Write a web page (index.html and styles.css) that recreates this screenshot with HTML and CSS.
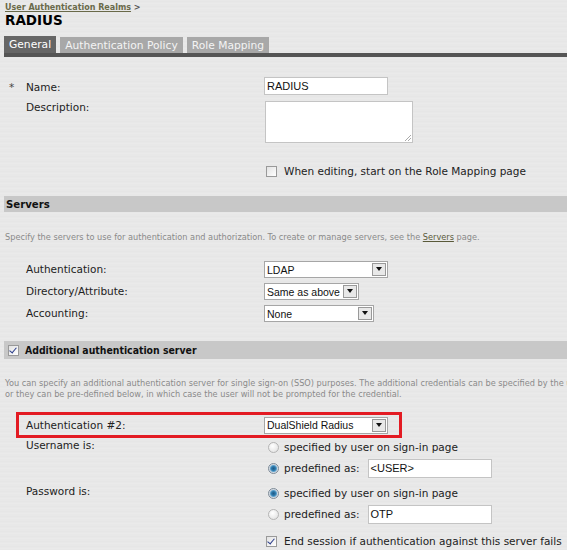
FILE: index.html
```html
<!DOCTYPE html>
<html>
<head>
<meta charset="utf-8">
<link rel="stylesheet" href="styles.css">
</head>
<body>
<div class="page">
  <div class="crumb"><a href="#">User Authentication Realms</a> &gt;</div>
  <h1 class="title">RADIUS</h1>
  <div class="tabs">
    <span class="tab active">General</span>
    <span class="tab">Authentication Policy</span>
    <span class="tab">Role Mapping</span>
  </div>
  <div class="tabbar"></div>

  <div class="form general">
    <div class="row r-name">
      <span class="star">*</span>
      <span class="label">Name:</span>
      <span class="ctl"><span class="input w124">RADIUS</span></span>
    </div>
    <div class="row r-desc">
      <span class="star"></span>
      <span class="label">Description:</span>
      <span class="ctl"><span class="textarea"><span class="grip"></span></span></span>
    </div>
    <div class="row r-check">
      <span class="star"></span>
      <span class="label"></span>
      <span class="ctl"><span class="cb"></span><span class="cbtext">When editing, start on the Role Mapping page</span></span>
    </div>
  </div>

  <div class="bar"><span class="bartext">Servers</span></div>
  <p class="help one">Specify the servers to use for authentication and authorization. To create or manage servers, see the <a href="#">Servers</a> page.</p>

  <div class="form servers">
    <div class="row r-sel">
      <span class="star"></span>
      <span class="label">Authentication:</span>
      <span class="ctl"><span class="select w124"><span class="val">LDAP</span><span class="arrow"></span></span></span>
    </div>
    <div class="row r-sel">
      <span class="star"></span>
      <span class="label">Directory/Attribute:</span>
      <span class="ctl"><span class="select w95"><span class="val">Same as above</span><span class="arrow"></span></span></span>
    </div>
    <div class="row r-sel">
      <span class="star"></span>
      <span class="label">Accounting:</span>
      <span class="ctl"><span class="select w110"><span class="val">None</span><span class="arrow"></span></span></span>
    </div>
  </div>

  <div class="bar bar2"><span class="cb checked"></span><span class="bartext">Additional authentication server</span></div>
  <p class="help two">You can specify an additional authentication server for single sign-on (SSO) purposes. The additional credentials can be specified by the user on the sign-in page,<br>or they can be pre-defined below, in which case the user will not be prompted for the credential.</p>

  <div class="redbox">
    <div class="row r-auth2">
      <span class="label">Authentication #2:</span>
      <span class="ctl"><span class="select w124"><span class="val">DualShield Radius</span><span class="arrow"></span></span></span>
    </div>
  </div>

  <div class="form extra">
    <div class="row r-opt">
      <span class="star"></span>
      <span class="label">Username is:</span>
      <span class="ctl opts">
        <span class="opt"><span class="radio"></span><span class="otext">specified by user on sign-in page</span></span>
        <span class="opt o2"><span class="radio on"></span><span class="otext">predefined as:</span><span class="input w124 small">&lt;USER&gt;</span></span>
      </span>
    </div>
    <div class="row r-opt r-pw">
      <span class="star"></span>
      <span class="label">Password is:</span>
      <span class="ctl opts">
        <span class="opt"><span class="radio on"></span><span class="otext">specified by user on sign-in page</span></span>
        <span class="opt o2"><span class="radio"></span><span class="otext">predefined as:</span><span class="input w124 small">OTP</span></span>
      </span>
    </div>
    <div class="row r-end">
      <span class="star"></span>
      <span class="label"></span>
      <span class="ctl"><span class="cb checked"></span><span class="cbtext">End session if authentication against this server fails</span></span>
    </div>
  </div>
</div>
</body>
</html>
```

FILE: styles.css
```css
html, body {
  margin: 0;
  padding: 0;
}
body {
  width: 567px;
  height: 550px;
  overflow: hidden;
  background: #e8e8e8;
  font-family: "DejaVu Sans", Verdana, sans-serif;
  font-size: 10.5px;
  color: #222;
}
.page {
  background: repeating-linear-gradient(180deg, #e9e9e9 0px, #e5e5e5 2px, #ebebeb 3px, #e7e7e7 5px);
  height: 550px;
  overflow: hidden;
  white-space: nowrap;
}
.crumb {
  padding: 3px 0 0 5px;
  height: 10px;
  font-size: 8px;
  font-weight: bold;
  color: #555;
  line-height: 10px;
}
.crumb a {
  color: #6a6a4a;
  text-decoration: underline;
}
.title {
  margin: 0;
  padding-left: 5px;
  font-size: 13.5px;
  font-weight: bold;
  color: #000;
  line-height: 14px;
  height: 14px;
}
.tabs {
  margin-top: 9px;
  padding-left: 4px;
  display: flex;
  gap: 4px;
  height: 17px;
}
.tab {
  display: flex;
  align-items: center;
  padding: 0 5px;
  background: #a8a8a8;
  color: #f4f4f4;
  font-size: 10.7px;
  height: 16px;
  margin-top: 1px;
}
.tab.active {
  background: #666;
  color: #fff;
  height: 17px;
  margin-top: 0;
}
.tabbar {
  height: 4px;
  background: #555;
  margin-left: 4px;
}

.row {
  display: flex;
  align-items: flex-start;
}
.star {
  width: 22px;
  padding-left: 5px;
  box-sizing: border-box;
  color: #444;
}
.label {
  width: 238px;
  flex: none;
}
.ctl {
  display: flex;
  align-items: center;
}

.general {
  margin-top: 20px;
  padding-left: 4px;
}
.r-name {
  height: 24px;
  align-items: flex-start;
}
.r-name .label, .r-name .star {
  padding-top: 4px;
}
.input {
  display: inline-block;
  box-sizing: border-box;
  height: 18px;
  background: #fff;
  border: 1px solid #c4c4c4;
  font-family: "Liberation Sans", Arial, sans-serif;
  font-size: 11px;
  line-height: 16px;
  padding-left: 2px;
  color: #111;
}
.w124 { width: 124px; }
.r-desc {
  height: 57px;
}
.r-desc .label { padding-top: 0; }
.textarea {
  display: block;
  position: relative;
  box-sizing: border-box;
  width: 148px;
  height: 42px;
  background: #fff;
  border: 1px solid #c4c4c4;
  margin-left: 1px;
}
.grip {
  position: absolute;
  right: 1px;
  bottom: 1px;
  width: 6px;
  height: 6px;
  background: linear-gradient(135deg, transparent 45%, #aaa 45%, #aaa 55%, transparent 55%, transparent 70%, #aaa 70%, #aaa 80%, transparent 80%);
}
.r-check {
  height: 26px;
  align-items: center;
}
.cb {
  display: inline-block;
  box-sizing: border-box;
  width: 11px;
  height: 11px;
  border: 1px solid #999;
  background: linear-gradient(135deg, #e2e2e2, #fff);
  margin-left: 2px;
  margin-right: 7px;
  position: relative;
}
.cb.checked::after {
  content: "";
  position: absolute;
  left: 2px;
  top: 0px;
  width: 3px;
  height: 6px;
  border-right: 1.5px solid #2a3c8a;
  border-bottom: 1.5px solid #2a3c8a;
  transform: rotate(40deg);
}

.bar {
  margin: 12px 0 0 4px;
  height: 16px;
  background: #c8c8c8;
  display: flex;
  align-items: center;
}
.bartext {
  font-family: "DejaVu Sans Condensed", "DejaVu Sans", sans-serif;
  font-weight: bold;
  font-size: 11.3px;
  color: #111;
  padding-left: 2px;
}
.bar2 {
  margin-top: 14px;
  height: 18px;
}
.bar2 .cb {
  margin-left: 4px;
  margin-right: 6px;
}
.bar2 .bartext {
  font-size: 10.4px;
  padding-left: 0;
}
.help {
  margin: 0;
  padding-left: 5px;
  font-size: 8.2px;
  color: #8a8a8a;
  line-height: 11px;
}
.help a {
  color: #5a5a3a;
}
.help.one {
  margin-top: 20px;
}
.help.two {
  margin-top: 19px;
  line-height: 11px;
}

.servers {
  margin-top: 18px;
  padding-left: 4px;
}
.r-sel {
  height: 22px;
}
.r-sel .label {
  padding-top: 2px;
}
.select {
  display: flex;
  align-items: center;
  box-sizing: border-box;
  height: 17px;
  background: #fff;
  border: 1px solid #a6a6a6;
  font-family: "Liberation Sans", Arial, sans-serif;
  font-size: 10.5px;
  color: #111;
}
.select .val {
  flex: 1;
  padding-left: 2px;
}
.select .arrow {
  width: 14px;
  height: 13px;
  box-sizing: border-box;
  margin-right: 1px;
  border: 1px solid #999;
  background: #e8e8e8;
  position: relative;
}
.select .arrow::after {
  content: "";
  position: absolute;
  left: 2.5px;
  top: 3px;
  border-left: 3.5px solid transparent;
  border-right: 3.5px solid transparent;
  border-top: 4px solid #111;
}
.w95 { width: 95px; }
.w110 { width: 110px; }

.redbox {
  margin: 12px 0 0 16px;
  width: 386px;
  height: 26px;
  box-sizing: border-box;
  border: 3px solid #e31b23;
  display: flex;
  align-items: center;
}
.r-auth2 {
  align-items: center;
}
.r-auth2 .label {
  width: 238px;
  padding-left: 7px;
}

.extra {
  padding-left: 4px;
  margin-top: 0;
}
.r-opt {
  height: 46px;
}
.r-opt .label {
  padding-top: 1px;
}
.opts {
  flex-direction: column;
  align-items: flex-start;
}
.opt {
  display: flex;
  align-items: center;
  height: 18px;
}
.opt.o2 {
  margin-top: 3px;
}
.radio {
  display: inline-block;
  width: 11px;
  height: 11px;
  box-sizing: border-box;
  border-radius: 50%;
  border: 1px solid #b4b4b4;
  background: radial-gradient(circle at 40% 35%, #fff, #ddd);
  margin-left: 4px;
  margin-right: 5px;
  position: relative;
}
.radio.on {
  border-color: #7c8a96;
  background: radial-gradient(circle at 50% 50%, #1f5a86 0, #2d78aa 2px, #5aa0cc 3px, #cfd8df 4px, #eef 5px);
}
.otext {
  margin-right: 8px;
}
.input.small {
  height: 19px;
}
.r-pw {
  height: 46px;
}
.r-end {
  height: 22px;
  align-items: center;
}
.r-end .cb {
  margin-left: 2px;
}
```
